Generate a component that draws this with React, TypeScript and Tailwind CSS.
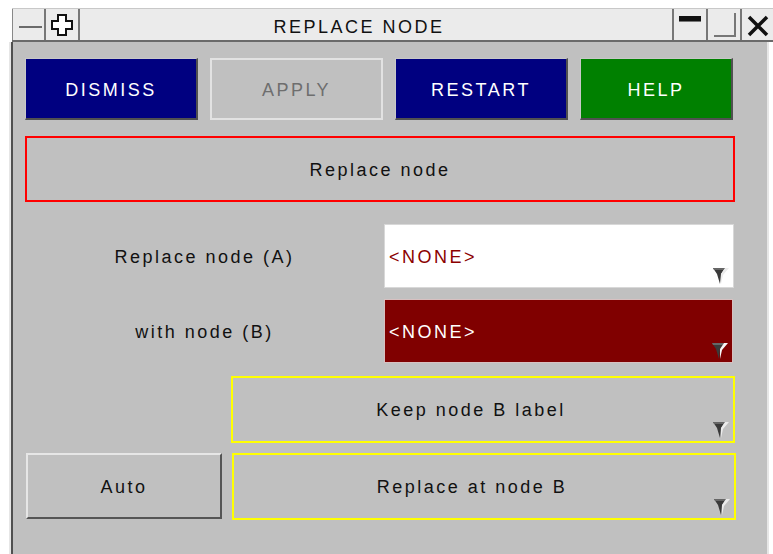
import React from "react";

const font = { fontFamily: '"Liberation Sans", Arial, sans-serif' };

function DropArrow({ light }: { light?: boolean }) {
  return (
    <svg width="18" height="20" viewBox="0 0 18 20" className="absolute right-[3px] bottom-[2px]">
      <polygon points="1,3 13,3 9,9 8,19 5,9" fill="#3a3a3a" />
      <polygon points="1,3 13,3 12,5 2,5" fill="#666" />
      <polygon points="13,3 17,3 11,10 9,19 9,9" fill={light ? "#f6f6f6" : "#ececec"} />
    </svg>
  );
}

function TopButton({ label, kind }: { label: string; kind: "navy" | "green" | "off" }) {
  const base = "flex items-center justify-center pt-[3px] h-[62px] text-[18px] tracking-[2.5px]";
  if (kind === "off")
    return (
      <div className={`${base} w-[173px] bg-[#c0c0c0] border-2 border-[#e2e2e2] text-[#6e6e6e]`}>{label}</div>
    );
  return (
    <div
      className={`${base} ${kind === "navy" ? "w-[173px] bg-[#000080]" : "w-[153px] bg-[#008000]"} border border-t-[#c8c8c8] border-l-[#c8c8c8] border-r-[#505050] border-b-[#505050] border-r-2 border-b-2 text-white`}
    >
      {label}
    </div>
  );
}

export default function App() {
  return (
    <div className="w-[773px] h-[554px] bg-white overflow-hidden text-[#111]" style={font}>
      {/* title bar */}
      <div className="mt-[8px] ml-[12px] h-[34px] flex bg-[#ebebeb] border-t border-[#c8c8c8] border-b-2 border-b-[#6a6a6a]">
        <div className="w-[34px] flex items-center justify-center border-l border-[#888] border-r-2 border-r-[#777]">
          <div className="w-[23px] h-[2px] bg-[#6b6b6b] ml-[4px] mt-[4px]" />
        </div>
        <div className="w-[34px] flex items-center justify-center border-r-2 border-[#777]">
          <svg width="24" height="24" viewBox="0 0 24 24">
            <path d="M8 2 H16 V8 H22 V16 H16 V22 H8 V16 H2 V8 H8 Z" fill="#fff" stroke="#111" strokeWidth="2" />
          </svg>
        </div>
        <div className="flex-1 flex items-center justify-center pt-[5px] text-[18px] tracking-[2.5px] pr-[34px]">REPLACE NODE</div>
        <div className="w-[34px] flex justify-center pt-[7px] border-l-2 border-[#777]">
          <div className="w-[22px] h-[6px] bg-[#111] border-b border-[#777]" />
        </div>
        <div className="w-[34px] flex items-end justify-end pr-[4px] pb-[3px] border-l-2 border-[#777]">
          <div className="w-[22px] h-[24px] border-r-2 border-b-2 border-[#777]" />
        </div>
        <div className="w-[33px] flex items-center justify-center pt-[3px] border-l-2 border-[#777]">
          <svg width="24" height="24" viewBox="0 0 24 24">
            <path d="M3 3 L21 21 M21 3 L3 21" stroke="#111" strokeWidth="3.5" />
          </svg>
        </div>
      </div>

      {/* panel */}
      <div className="ml-[9px] mr-[4px] h-[512px] flex border-l-2 border-[#e6e6e6]">
        <div className="flex-1 bg-[#c0c0c0] border-l-2 border-[#505050] border-r-2 border-r-[#e6e6e6] pl-[12px] pt-[16px]">
          <div className="flex gap-[12px]">
            <TopButton label="DISMISS" kind="navy" />
            <TopButton label="APPLY" kind="off" />
            <TopButton label="RESTART" kind="navy" />
            <TopButton label="HELP" kind="green" />
          </div>

          <div className="mt-[16px] w-[710px] h-[66px] border-2 border-[#ff0000] flex items-center justify-center pt-[2px] text-[18px] tracking-[2.5px]">
            Replace node
          </div>

          <div className="mt-[22px] flex items-center">
            <div className="w-[359px] text-center pt-[3px] text-[18px] tracking-[2.5px]">Replace node (A)</div>
            <div className="relative w-[350px] h-[64px] bg-white border border-[#d8d8d8] flex items-center pl-[4px] pt-[3px] text-[18px] tracking-[2.5px] text-[#8b0000]">
              &lt;NONE&gt;
              <DropArrow />
            </div>
          </div>

          <div className="mt-[11px] flex items-center">
            <div className="w-[359px] text-center pt-[3px] text-[18px] tracking-[2.5px]">with node (B)</div>
            <div className="relative w-[349px] h-[64px] bg-[#800000] border border-[#d8c0c0] flex items-center pl-[4px] pt-[3px] text-[18px] tracking-[2.5px] text-white">
              &lt;NONE&gt;
              <DropArrow light />
            </div>
          </div>

          <div className="mt-[13px] ml-[206px] relative w-[504px] h-[67px] border-2 border-[#ffff00] flex items-center justify-center pr-[24px] pt-[2px] text-[18px] tracking-[2.5px]">
            Keep node B label
            <DropArrow />
          </div>

          <div className="mt-[10px] flex gap-[10px]">
            <div className="w-[196px] h-[66px] ml-[1px] border-2 border-t-[#e6e6e6] border-l-[#e6e6e6] border-r-[#555] border-b-[#555] flex items-center justify-center pt-[2px] text-[18px] tracking-[2.5px]">
              Auto
            </div>
            <div className="relative w-[504px] h-[67px] border-2 border-[#ffff00] flex items-center justify-center pr-[24px] pt-[2px] text-[18px] tracking-[2.5px]">
              Replace at node B
              <DropArrow />
            </div>
          </div>
        </div>
      </div>
    </div>
  );
}
